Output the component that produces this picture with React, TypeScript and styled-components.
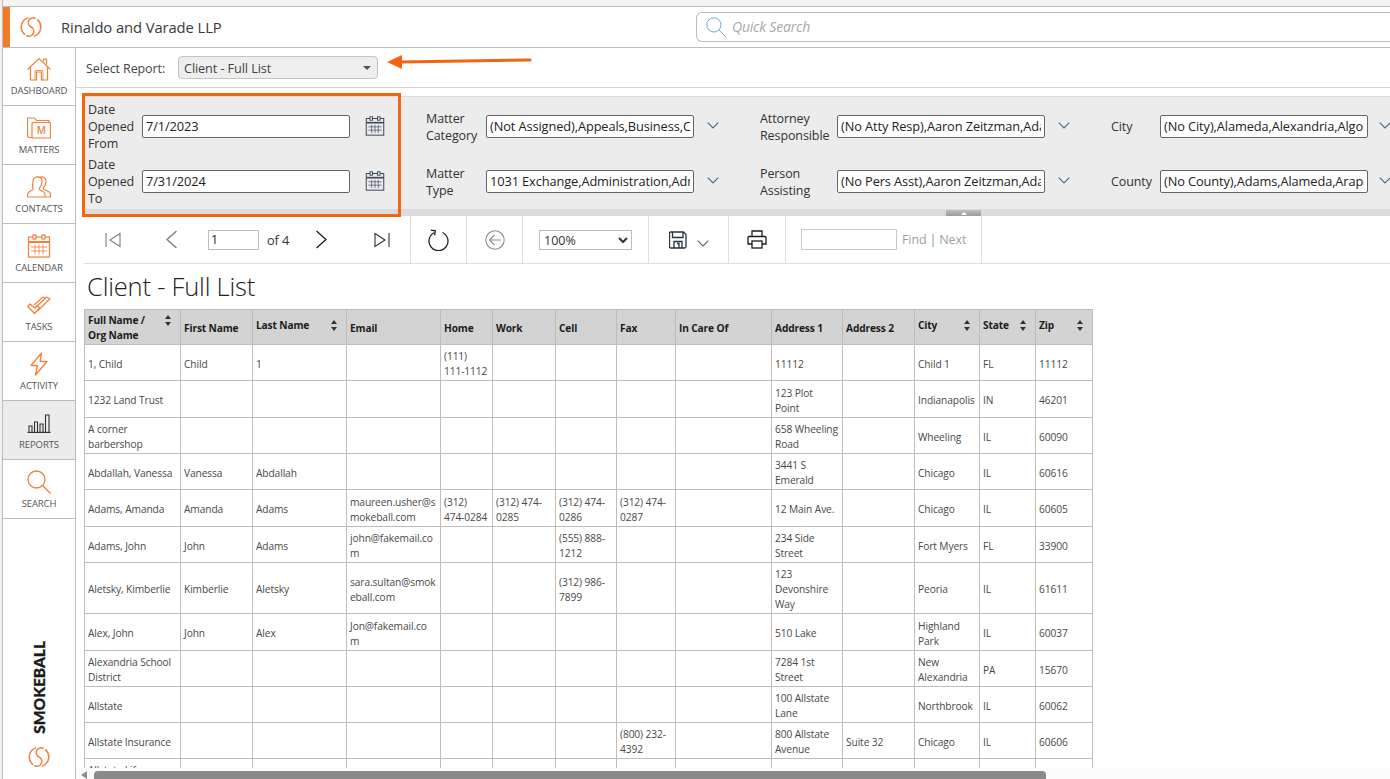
import React from "react";
import styled, { createGlobalStyle } from "styled-components";

const GlobalStyle = createGlobalStyle`
  html, body {
    margin: 0;
    padding: 0;
    background: #fff;
  }
  * {
    box-sizing: border-box;
  }
`;

const FONT = `"Open Sans", "Noto Sans", sans-serif`;
const ORANGE = "#f0803a";
const MARK = "#f4650f";

const Screen = styled.div`
  position: relative;
  width: 1390px;
  height: 779px;
  overflow: hidden;
  display: flex;
  font-family: ${FONT};
  color: #333;
  background: #fff;
`;

const Edge = styled.div`
  width: 3px;
  flex-shrink: 0;
  background: #f1f1f1;
  border-right: 1px solid #bdbdbd;
`;

const Window = styled.div`
  flex: 1;
  min-width: 0;
  display: flex;
  flex-direction: column;
`;

const TopStrip = styled.div`
  height: 7px;
  flex-shrink: 0;
  background: #f4f4f4;
  border-bottom: 1px solid #bcbcbc;
`;

const Header = styled.header`
  height: 41px;
  flex-shrink: 0;
  display: flex;
  align-items: center;
  background: #fff;
  border-bottom: 1px solid #bcbcbc;
`;

const HeaderAccent = styled.div`
  width: 7px;
  height: 40px;
  background: #f47a25;
  flex-shrink: 0;
`;

const HeaderLogo = styled.div`
  width: 22px;
  height: 22px;
  margin-left: 10px;
  flex-shrink: 0;
`;

const Firm = styled.div`
  margin-left: 19px;
  font-size: 14.8px;
  font-weight: 500;
  letter-spacing: -0.1px;
  color: #3a3a3a;
`;

const QuickSearch = styled.div`
  margin-left: auto;
  width: 694px;
  height: 30px;
  margin-top: -1px;
  display: flex;
  align-items: center;
  gap: 6px;
  padding-left: 9px;
  border: 1px solid #bcbcbc;
  border-right: none;
  border-radius: 6px 0 0 6px;
`;

const QuickSearchText = styled.span`
  font-size: 14px;
  font-style: italic;
  letter-spacing: -0.2px;
  color: #a8a8a8;
`;

const Body = styled.div`
  flex: 1;
  min-height: 0;
  display: flex;
`;

const Sidebar = styled.nav`
  width: 73px;
  flex-shrink: 0;
  display: flex;
  flex-direction: column;
  border-right: 1px solid #bcbcbc;
`;

const NavItem = styled.div<{ $active?: boolean; $first?: boolean }>`
  height: ${(p) => (p.$first ? 58 : 59)}px;
  flex-shrink: 0;
  display: flex;
  flex-direction: column;
  align-items: center;
  justify-content: flex-end;
  padding-bottom: 8px;
  background: ${(p) => (p.$active ? "#ececec" : "#fff")};
  border-bottom: 1px solid #bcbcbc;
`;

const NavIcon = styled.div`
  height: 24px;
  margin-bottom: 3px;
  display: flex;
  align-items: center;
  justify-content: center;
`;

const NavLabel = styled.div`
  font-size: 9.5px;
  line-height: 13px;
  letter-spacing: -0.1px;
  color: #555;
`;

const Brand = styled.div`
  margin-top: auto;
  padding-bottom: 11px;
  display: flex;
  flex-direction: column;
  align-items: center;
  gap: 12px;
`;

const BrandName = styled.div`
  writing-mode: vertical-rl;
  transform: rotate(180deg);
  font-family: "Lato", ${FONT};
  font-size: 15.5px;
  font-weight: 900;
  letter-spacing: 0;
  line-height: 16px;
  color: #1a1a1a;
  -webkit-text-stroke: 0.3px #1a1a1a;
`;

const BrandLogo = styled.div`
  width: 22px;
  height: 22px;
`;

const Main = styled.main`
  flex: 1;
  min-width: 0;
  display: flex;
  flex-direction: column;
`;

const ReportPicker = styled.div`
  height: 40px;
  flex-shrink: 0;
  display: flex;
  align-items: center;
  padding: 0 0 0 10px;
  border-bottom: 1px solid #d4d4d4;
`;

const PickerLabel = styled.span`
  width: 92px;
  padding-top: 1px;
  font-size: 12.5px;
  letter-spacing: -0.1px;
  color: #444;
`;

const PickerSelect = styled.div`
  width: 200px;
  height: 23px;
  display: flex;
  align-items: center;
  justify-content: space-between;
  padding: 1px 6px 0 5px;
  background: #eeeeee;
  border: 1px solid #c4c4c4;
  border-radius: 4px;
  font-size: 12.7px;
  letter-spacing: -0.1px;
  color: #444;
`;

const Caret = styled.span`
  width: 0;
  height: 0;
  border-left: 4px solid transparent;
  border-right: 4px solid transparent;
  border-top: 4px solid #555;
`;

const Params = styled.section`
  margin: 8px 0 0 8px;
  height: 113px;
  flex-shrink: 0;
  display: flex;
  gap: 41px;
  padding: 4px 0 0 4px;
  background: #ececec;
  border-top: 1px solid #dcdcdc;
  overflow: hidden;
`;

const ParamColumn = styled.div`
  display: grid;
  grid-template-rows: 51px 51px;
  row-gap: 4px;
  flex-shrink: 0;
`;

const Field = styled.div`
  display: flex;
  align-items: center;
`;

const FieldLabel = styled.label<{ $width: number }>`
  width: ${(p) => p.$width}px;
  flex-shrink: 0;
  font-size: 12.5px;
  line-height: 17px;
  letter-spacing: -0.1px;
  color: #333;
`;

const FieldInput = styled.input`
  width: 208px;
  height: 23px;
  margin-top: -1px;
  flex-shrink: 0;
  padding: 0 3px 0 3px;
  font-family: ${FONT};
  font-size: 12.8px;
  letter-spacing: -0.1px;
  color: #222;
  background: #fff;
  border: 1px solid #666;
  border-radius: 2px;
  outline: none;
`;

const FieldAddon = styled.div<{ $gap: number }>`
  margin: -2px 0 0 ${(p) => p.$gap}px;
  display: flex;
  align-items: center;
  flex-shrink: 0;
`;

const Splitter = styled.div`
  margin-left: 8px;
  height: 7px;
  flex-shrink: 0;
  padding-left: 862px;
  background: #dcdcdc;
`;

const SplitterHandle = styled.div`
  width: 35px;
  height: 6px;
  margin-top: 1px;
  display: flex;
  align-items: center;
  justify-content: center;
  background: linear-gradient(#bdbdbd, #9c9c9c);
`;

const SplitterCaret = styled.span`
  width: 0;
  height: 0;
  border-left: 3px solid transparent;
  border-right: 3px solid transparent;
  border-bottom: 3px solid #fff;
`;

const Toolbar = styled.div`
  margin-left: 8px;
  height: 48px;
  flex-shrink: 0;
  display: flex;
  border-bottom: 1px solid #dedede;
`;

const ToolGroup = styled.div<{ $width: number }>`
  width: ${(p) => p.$width}px;
  flex-shrink: 0;
  display: flex;
  align-items: center;
  justify-content: center;
  border-right: 1px solid #dedede;
`;

const Pager = styled(ToolGroup)`
  justify-content: flex-start;
  padding-left: 21px;
`;

const PagerSlot = styled.div<{ $left: number }>`
  margin-left: ${(p) => p.$left}px;
  display: flex;
  align-items: center;
`;

const PageInput = styled.input`
  width: 51px;
  height: 20px;
  padding: 0 2px;
  font-family: ${FONT};
  font-size: 12.5px;
  color: #222;
  border: 1px solid #bdbdbd;
  outline: none;
`;

const PageCount = styled.span`
  font-size: 12.8px;
  letter-spacing: -0.1px;
  color: #333;
`;

const ZoomSelect = styled.select`
  width: 93px;
  height: 20px;
  font-family: ${FONT};
  font-size: 12.5px;
  color: #333;
  background: #fff;
  border: 1px solid #bdbdbd;
  outline: none;
`;

const SaveChevron = styled.div`
  margin: 8px 0 0 10px;
  display: flex;
`;

const FindGroup = styled(ToolGroup)`
  justify-content: flex-start;
  padding-left: 15px;
  gap: 5px;
`;

const FindInput = styled.input`
  width: 96px;
  height: 21px;
  border: 1px solid #c8c8c8;
  outline: none;
`;

const FindText = styled.span`
  font-size: 12.5px;
  letter-spacing: -0.1px;
  color: #a0a0a0;
`;

const FindBar = styled.span`
  margin: 0 3px;
  color: #5a9bd5;
`;

const ReportArea = styled.div`
  flex: 1;
  min-height: 0;
  overflow: hidden;
  padding-left: 8px;
`;

const ReportTitle = styled.h1`
  margin: 0;
  height: 45px;
  padding: 4px 0 0 3px;
  font-size: 25.5px;
  line-height: 36px;
  font-weight: 300;
  letter-spacing: -0.2px;
  color: #222;
`;

const Grid = styled.table`
  width: 1009px;
  table-layout: fixed;
  border-collapse: collapse;
  font-size: 10.2px;
  line-height: 15px;
`;

const HeadCell = styled.th`
  height: 35px;
  padding: 3px 3px 1px;
  text-align: left;
  vertical-align: middle;
  font-weight: 700;
  letter-spacing: -0.15px;
  color: #1c1c1c;
  background: #d3d3d3;
  border: 1px solid #bdbdbd;
`;

const SortHead = styled.div<{ $lines?: number }>`
  display: flex;
  justify-content: space-between;
  align-items: flex-start;
  padding-bottom: ${(p) => (p.$lines === 2 ? 0 : 6)}px;
  padding-right: 6px;
`;

const SortText = styled.span`
  white-space: pre;
`;

const SortArrows = styled.div`
  margin-top: 2px;
  display: flex;
  flex-direction: column;
  gap: 3px;
  flex-shrink: 0;
`;

const ArrowUp = styled.span`
  width: 0;
  height: 0;
  border-left: 3px solid transparent;
  border-right: 3px solid transparent;
  border-bottom: 4px solid #333;
`;

const ArrowDown = styled(ArrowUp)`
  border-bottom: none;
  border-top: 4px solid #333;
`;

const Row = styled.tr<{ $height: number }>`
  td {
    height: ${(p) => p.$height}px;
  }
`;

const Cell = styled.td`
  padding: 4px 3px 1px;
  vertical-align: middle;
  white-space: pre;
  overflow: hidden;
  letter-spacing: -0.1px;
  color: #484848;
  border: 1px solid #bdbdbd;
`;

const ScrollTrack = styled.div`
  height: 11px;
  flex-shrink: 0;
  display: flex;
  align-items: flex-end;
  padding-left: 5px;
  background: #fbfbfb;
`;

const ScrollArrow = styled.span`
  width: 0;
  height: 0;
  border-top: 4px solid transparent;
  border-bottom: 4px solid transparent;
  border-right: 6px solid #8c8c8c;
`;

const ScrollThumb = styled.div`
  width: 952px;
  height: 8px;
  margin-left: 7px;
  background: #8a8a8a;
  border-radius: 4px 4px 0 0;
`;

const MarkBox = styled.div`
  position: absolute;
  left: 82px;
  top: 93px;
  width: 319px;
  height: 124px;
  border: 3px solid ${MARK};
  pointer-events: none;
`;

const MarkArrow = styled.svg`
  position: absolute;
  left: 385px;
  top: 52px;
`;

const SmokeballLogo = () => (
  <svg width="22" height="22" viewBox="0 0 24 24" fill="none" stroke={ORANGE} strokeWidth="1.6" strokeLinecap="round">
    <path d="M8.500 2.100A10.500 10.500 0 0 0 5 20" />
    <path d="M15.500 21.900A10.500 10.500 0 0 0 19 4" />
    <path d="M12 1.500A5.250 5.250 0 0 0 12 12 5.250 5.250 0 0 1 12 22.500" transform="rotate(25 12 12)" />
  </svg>
);

const HomeIcon = () => (
  <svg width="24" height="24" viewBox="0 0 24 24" fill="none" stroke={ORANGE} strokeWidth="1.2">
    <path d="M0.5 12.500 12 1.500l11.500 11" />
    <path d="M16.500 4.500V2h3v5.500" />
    <path d="M3.500 10v13h6v-8h5v8h6V10" />
    <path d="M8 23v-9.500h8V23" strokeWidth="0.8" />
  </svg>
);

const MattersIcon = () => (
  <svg width="24" height="22" viewBox="0 0 24 22" fill="none" stroke={ORANGE} strokeWidth="1.2">
    <path d="M5 20.500H2.500a2 2 0 0 1-2-2V1h7l2 2.500H22V5" />
    <rect x="5" y="5.500" width="18.500" height="15.500" rx="1" />
    <text x="14.300" y="17" textAnchor="middle" fontFamily={FONT} fontSize="10" fontWeight="600" fill={ORANGE} stroke="none">
      M
    </text>
  </svg>
);

const ContactsIcon = () => (
  <svg width="24" height="22" viewBox="0 0 24 22" fill="none" stroke={ORANGE} strokeWidth="1.2">
    <path d="M12.500 1.500c2-1.300 6-.8 6.500 3 .3 3-1 5.500-2.500 7-.5 1 0 2 1.500 2.500 2.500 1 5.500 1.800 5.500 4V21h-5" />
    <path d="M6 5c0-5.500 9-5.500 9 0 0 3-1 5.500-2.500 7-.5 1 0 2 1.500 2.500 2.500 1 4 2 4 4V21H.5v-2.500c0-2 1.800-3 4-4 1.500-.5 2-1.500 1.500-2.500C5 10.500 6 8 6 5Z" />
  </svg>
);

const CalendarIcon = ({ color = ORANGE, size = 24 }: { color?: string; size?: number }) => (
  <svg width={size} height={size} viewBox="0 0 24 24" fill="none" stroke={color} strokeWidth="1.2">
    <rect x="1.500" y="3" width="21" height="20" />
    <path d="M1.500 8h21" strokeWidth="2" />
    <rect x="6" y="1" width="3" height="4" fill="#fff" />
    <rect x="15" y="1" width="3" height="4" fill="#fff" />
    <path d="M4 13h16M4 17h16M8 10.500v10M12 10.500v10M16 10.500v10" strokeWidth="1" opacity="0.8" />
  </svg>
);

const TasksIcon = () => (
  <svg width="24" height="20" viewBox="0 0 24 20" fill="none" stroke={ORANGE} strokeWidth="1.2" strokeLinejoin="round">
    <path d="M.8 11.500 3 9l5 4 2.300-2.500 2.200 2.500-5 5.500Z" />
    <path d="M8 13 19.500 2l3.500 1.800L10.500 16" />
    <path d="M7 10 16 2l3 1.200" />
  </svg>
);

const BoltIcon = () => (
  <svg width="18" height="24" viewBox="0 0 18 24" fill="none" stroke={ORANGE} strokeWidth="1.3" strokeLinejoin="round">
    <path d="M11.500.8 1 13.500h6.500L5.500 23 17 9.500h-6.800Z" />
  </svg>
);

const ReportsIcon = () => (
  <svg width="24" height="20" viewBox="0 0 24 20" fill="none" stroke="#333" strokeWidth="1.1">
    <path d="M.5 19.500h23" strokeWidth="1.300" />
    <path d="M2 19v-6h3v6M7.500 19V9h3v10M13 19v-8h3v8M18.500 19V2h3.500v17" />
  </svg>
);

const SearchIcon = ({ color = ORANGE, size = 24, width = 1.3 }: { color?: string; size?: number; width?: number }) => (
  <svg width={size} height={size} viewBox="0 0 24 24" fill="none" stroke={color} strokeWidth={width}>
    <circle cx="9.500" cy="9.500" r="8.500" />
    <path d="m15.500 15.500 8 8" />
  </svg>
);

const Chevron = ({ color = "#4b6a88" }: { color?: string }) => (
  <svg width="12" height="7" viewBox="0 0 12 7" fill="none" stroke={color} strokeWidth="1.1">
    <path d="m.7.700 5.300 5.300L11.300.700" />
  </svg>
);

const PagerFirst = () => (
  <svg width="16" height="16" viewBox="0 0 16 16" fill="none" stroke="#6d7f90" strokeWidth="1.1">
    <path d="M1 1v14M15 1.500 5 8l10 6.500Z" />
  </svg>
);

const PagerLast = () => (
  <svg width="16" height="16" viewBox="0 0 16 16" fill="none" stroke="#23303c" strokeWidth="1.1">
    <path d="M15 1v14M1 1.500 11 8 1 14.500Z" />
  </svg>
);

const PagerPrev = () => (
  <svg width="13" height="19" viewBox="0 0 13 19" fill="none" stroke="#6d7f90" strokeWidth="1.3">
    <path d="M11.500 1 2 9.500l9.500 8.500" />
  </svg>
);

const PagerNext = () => (
  <svg width="13" height="19" viewBox="0 0 13 19" fill="none" stroke="#1c1c1c" strokeWidth="1.3">
    <path d="m1.500 1 9.500 8.500L1.500 18" />
  </svg>
);

const RefreshIcon = () => (
  <svg width="21" height="22" viewBox="0 0 21 22" fill="none" stroke="#222" strokeWidth="1.3">
    <path d="M6.500 3.500a9.500 9.500 0 1 0 8 0" />
    <path d="M2.500 1.500h4.500v4.500" transform="rotate(8 5 4)" />
  </svg>
);

const BackIcon = () => (
  <svg width="20" height="20" viewBox="0 0 20 20" fill="none" stroke="#8e8e8e" strokeWidth="1.1">
    <circle cx="10" cy="10" r="9.200" />
    <path d="M16 10H4.500M9.500 5l-5 5 5 5" />
  </svg>
);

const SaveIcon = () => (
  <svg width="18" height="18" viewBox="0 0 18 18" fill="none" stroke="#26323e" strokeWidth="1.3">
    <path d="M1.500 1h13l2.500 2.500v12a1.500 1.500 0 0 1-1.500 1.500h-14a1 1 0 0 1-1-1V2a1 1 0 0 1 1-1Z" />
    <path d="M3.500 1v5.500h10.500V1M5 17v-6.500h8V17M8 12.500h2V17" />
  </svg>
);

const PrintIcon = () => (
  <svg width="20" height="19" viewBox="0 0 20 19" fill="none" stroke="#1c1c1c" strokeWidth="1.3">
    <path d="M5 6.500V1h10v5.500" />
    <path d="M5 14H1V7.500a1 1 0 0 1 1-1h16a1 1 0 0 1 1 1V14h-4" />
    <rect x="5" y="11" width="10" height="7" />
  </svg>
);

const SortMark = () => (
  <SortArrows>
    <ArrowUp />
    <ArrowDown />
  </SortArrows>
);

const NAV = [
  { label: "DASHBOARD", icon: <HomeIcon /> },
  { label: "MATTERS", icon: <MattersIcon /> },
  { label: "CONTACTS", icon: <ContactsIcon /> },
  { label: "CALENDAR", icon: <CalendarIcon /> },
  { label: "TASKS", icon: <TasksIcon /> },
  { label: "ACTIVITY", icon: <BoltIcon /> },
  { label: "REPORTS", icon: <ReportsIcon />, active: true },
  { label: "SEARCH", icon: <SearchIcon /> },
];

const PARAMS = [
  {
    labelWidth: 54,
    addon: <CalendarIcon color="#3c4a57" size={20} />,
    addonGap: 15,
    rows: [
      { label: "Date Opened From", value: "7/1/2023" },
      { label: "Date Opened To", value: "7/31/2024" },
    ],
  },
  {
    labelWidth: 60,
    addon: <Chevron />,
    addonGap: 13,
    rows: [
      { label: "Matter Category", value: "(Not Assigned),Appeals,Business,Civil" },
      { label: "Matter Type", value: "1031 Exchange,Administration,Admiralty" },
    ],
  },
  {
    labelWidth: 77,
    addon: <Chevron />,
    addonGap: 13,
    rows: [
      { label: "Attorney Responsible", value: "(No Atty Resp),Aaron Zeitzman,Adam" },
      { label: "Person Assisting", value: "(No Pers Asst),Aaron Zeitzman,Adam" },
    ],
  },
  {
    labelWidth: 49,
    addon: <Chevron />,
    addonGap: 11,
    rows: [
      { label: "City", value: "(No City),Alameda,Alexandria,Algonquin" },
      { label: "County", value: "(No County),Adams,Alameda,Arapahoe" },
    ],
  },
];

const COLUMNS = [96, 72, 94, 94, 52, 63, 61, 59, 96, 71, 72, 65, 56, 57];

const HEADS = [
  { text: "Full Name /\nOrg Name", sort: true, lines: 2 },
  { text: "First Name" },
  { text: "Last Name", sort: true },
  { text: "Email" },
  { text: "Home" },
  { text: "Work" },
  { text: "Cell" },
  { text: "Fax" },
  { text: "In Care Of" },
  { text: "Address 1" },
  { text: "Address 2" },
  { text: "City", sort: true },
  { text: "State", sort: true },
  { text: "Zip", sort: true },
];

const ROWS: { height: number; cells: string[] }[] = [
  { height: 36, cells: ["1, Child", "Child", "1", "", "(111)\n111-1112", "", "", "", "", "11112", "", "Child 1", "FL", "11112"] },
  { height: 37, cells: ["1232 Land Trust", "", "", "", "", "", "", "", "", "123 Plot\nPoint", "", "Indianapolis", "IN", "46201"] },
  { height: 36, cells: ["A corner\nbarbershop", "", "", "", "", "", "", "", "", "658 Wheeling\nRoad", "", "Wheeling", "IL", "60090"] },
  { height: 36, cells: ["Abdallah, Vanessa", "Vanessa", "Abdallah", "", "", "", "", "", "", "3441 S\nEmerald", "", "Chicago", "IL", "60616"] },
  { height: 37, cells: ["Adams, Amanda", "Amanda", "Adams", "maureen.usher@s\nmokeball.com", "(312)\n474-0284", "(312) 474-\n0285", "(312) 474-\n0286", "(312) 474-\n0287", "", "12 Main Ave.", "", "Chicago", "IL", "60605"] },
  { height: 36, cells: ["Adams, John", "John", "Adams", "john@fakemail.co\nm", "", "", "(555) 888-\n1212", "", "", "234 Side\nStreet", "", "Fort Myers", "FL", "33900"] },
  { height: 51, cells: ["Aletsky, Kimberlie", "Kimberlie", "Aletsky", "sara.sultan@smok\neball.com", "", "", "(312) 986-\n7899", "", "", "123\nDevonshire\nWay", "", "Peoria", "IL", "61611"] },
  { height: 37, cells: ["Alex, John", "John", "Alex", "Jon@fakemail.co\nm", "", "", "", "", "", "510 Lake", "", "Highland\nPark", "IL", "60037"] },
  { height: 36, cells: ["Alexandria School\nDistrict", "", "", "", "", "", "", "", "", "7284 1st\nStreet", "", "New\nAlexandria", "PA", "15670"] },
  { height: 36, cells: ["Allstate", "", "", "", "", "", "", "", "", "100 Allstate\nLane", "", "Northbrook", "IL", "60062"] },
  { height: 36, cells: ["Allstate Insurance", "", "", "", "", "", "", "(800) 232-\n4392", "", "800 Allstate\nAvenue", "Suite 32", "Chicago", "IL", "60606"] },
  { height: 36, cells: ["Allstate Life\nInsurance", "", "", "", "", "", "", "", "", "", "", "", "", ""] },
];

const App = (): React.ReactElement => {
  return (
    <Screen>
      <GlobalStyle />
      <Edge />
      <Window>
        <TopStrip />
        <Header>
          <HeaderAccent />
          <HeaderLogo>
            <SmokeballLogo />
          </HeaderLogo>
          <Firm>Rinaldo and Varade LLP</Firm>
          <QuickSearch>
            <SearchIcon color="#6ea6e6" size={20} width={1.2} />
            <QuickSearchText>Quick Search</QuickSearchText>
          </QuickSearch>
        </Header>
        <Body>
          <Sidebar>
            {NAV.map((item, index) => (
              <NavItem key={item.label} $active={item.active} $first={index === 0}>
                <NavIcon>{item.icon}</NavIcon>
                <NavLabel>{item.label}</NavLabel>
              </NavItem>
            ))}
            <Brand>
              <BrandName>SMOKEBALL</BrandName>
              <BrandLogo>
                <SmokeballLogo />
              </BrandLogo>
            </Brand>
          </Sidebar>
          <Main>
            <ReportPicker>
              <PickerLabel>Select Report:</PickerLabel>
              <PickerSelect>
                Client - Full List
                <Caret />
              </PickerSelect>
            </ReportPicker>
            <Params>
              {PARAMS.map((column) => (
                <ParamColumn key={column.rows[0].label}>
                  {column.rows.map((row) => (
                    <Field key={row.label}>
                      <FieldLabel $width={column.labelWidth}>{row.label}</FieldLabel>
                      <FieldInput readOnly value={row.value} />
                      <FieldAddon $gap={column.addonGap}>{column.addon}</FieldAddon>
                    </Field>
                  ))}
                </ParamColumn>
              ))}
            </Params>
            <Splitter>
              <SplitterHandle>
                <SplitterCaret />
              </SplitterHandle>
            </Splitter>
            <Toolbar>
              <Pager $width={327}>
                <PagerFirst />
                <PagerSlot $left={44}>
                  <PagerPrev />
                </PagerSlot>
                <PagerSlot $left={30}>
                  <PageInput readOnly value="1" />
                </PagerSlot>
                <PagerSlot $left={8}>
                  <PageCount>of 4</PageCount>
                </PagerSlot>
                <PagerSlot $left={26}>
                  <PagerNext />
                </PagerSlot>
                <PagerSlot $left={46}>
                  <PagerLast />
                </PagerSlot>
              </Pager>
              <ToolGroup $width={56}>
                <RefreshIcon />
              </ToolGroup>
              <ToolGroup $width={56}>
                <BackIcon />
              </ToolGroup>
              <ToolGroup $width={126}>
                <ZoomSelect defaultValue="100%">
                  <option>100%</option>
                </ZoomSelect>
              </ToolGroup>
              <ToolGroup $width={80}>
                <SaveIcon />
                <SaveChevron>
                  <Chevron />
                </SaveChevron>
              </ToolGroup>
              <ToolGroup $width={57}>
                <PrintIcon />
              </ToolGroup>
              <FindGroup $width={196}>
                <FindInput />
                <FindText>
                  Find<FindBar>|</FindBar>Next
                </FindText>
              </FindGroup>
            </Toolbar>
            <ReportArea>
              <ReportTitle>Client - Full List</ReportTitle>
              <Grid>
                <colgroup>
                  {COLUMNS.map((width, index) => (
                    <col key={index} width={width} />
                  ))}
                </colgroup>
                <thead>
                  <tr>
                    {HEADS.map((head) => (
                      <HeadCell key={head.text}>
                        {head.sort ? (
                          <SortHead $lines={head.lines}>
                            <SortText>{head.text}</SortText>
                            <SortMark />
                          </SortHead>
                        ) : (
                          head.text
                        )}
                      </HeadCell>
                    ))}
                  </tr>
                </thead>
                <tbody>
                  {ROWS.map((row) => (
                    <Row key={row.cells[0]} $height={row.height}>
                      {row.cells.map((cell, index) => (
                        <Cell key={index}>{cell}</Cell>
                      ))}
                    </Row>
                  ))}
                </tbody>
              </Grid>
            </ReportArea>
            <ScrollTrack>
              <ScrollArrow />
              <ScrollThumb />
            </ScrollTrack>
          </Main>
        </Body>
      </Window>
      <MarkBox />
      <MarkArrow width="148" height="20" viewBox="0 0 148 20" fill="none">
        <path d="M2 10 17 3v14Z" fill={MARK} />
        <path d="M15 10 145 8" stroke={MARK} strokeWidth="3" strokeLinecap="round" />
      </MarkArrow>
    </Screen>
  );
};

export default App;
